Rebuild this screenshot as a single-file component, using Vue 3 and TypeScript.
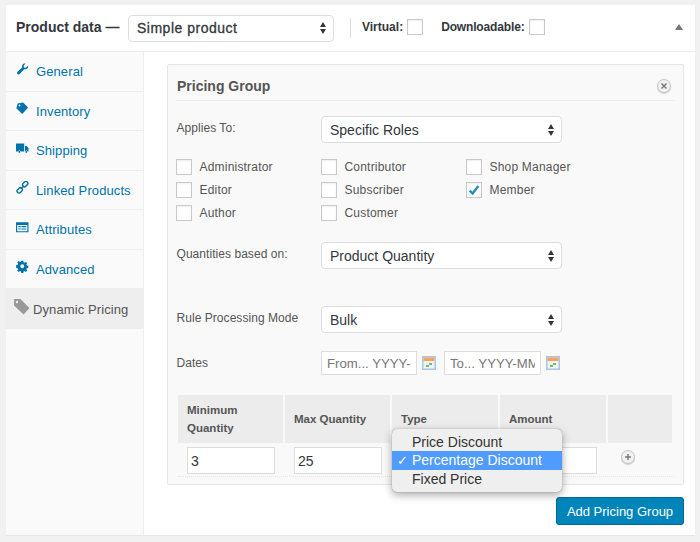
<script setup lang="ts">
interface Tab {
  label: string
  icon: string
  active?: boolean
}

const tabs: Tab[] = [
  { label: 'General', icon: 'wrench' },
  { label: 'Inventory', icon: 'diamond' },
  { label: 'Shipping', icon: 'truck' },
  { label: 'Linked Products', icon: 'link' },
  { label: 'Attributes', icon: 'list' },
  { label: 'Advanced', icon: 'gear' },
  { label: 'Dynamic Pricing', icon: 'tag', active: true }
]

const roles = [
  { label: 'Administrator', checked: false },
  { label: 'Contributor', checked: false },
  { label: 'Shop Manager', checked: false },
  { label: 'Editor', checked: false },
  { label: 'Subscriber', checked: false },
  { label: 'Member', checked: true },
  { label: 'Author', checked: false },
  { label: 'Customer', checked: false }
]

const options = ['Price Discount', 'Percentage Discount', 'Fixed Price']
const selectedOption = 'Percentage Discount'
</script>

<template>
  <div class="page">
    <div class="panel">
      <header class="panel__head">
        <span class="panel__title">Product data —</span>
        <div class="select select--type">
          <span>Simple product</span>
          <svg class="select__arrows" viewBox="0 0 6 12"><path d="M3 0 6 5H0zM3 12 0 7h6z" /></svg>
        </div>
        <span class="panel__divider"></span>
        <label class="panel__opt">Virtual: <span class="check"></span></label>
        <label class="panel__opt panel__opt--down">Downloadable: <span class="check"></span></label>
        <span class="panel__toggle"></span>
      </header>

      <div class="panel__body">
        <nav class="tabs">
          <a v-for="tab in tabs" :key="tab.label" class="tab" :class="{ 'tab--active': tab.active }">
            <svg class="tab__icon" viewBox="0 0 16 16">
              <path v-if="tab.icon === 'wrench'" d="M15.500 3.600c.3 1.600-.2 3-1.400 3.800-1 .7-2.200.8-3.300.4L4.800 14c-.8.800-2.100.9-2.900.1s-.7-2.100.1-2.900l6-5.900c-.4-1.100-.3-2.300.4-3.300C9.200 1 10.800.400 12.400.700L9.800 3.300l.5 2.300 2.300.5z" />
              <path v-else-if="tab.icon === 'diamond'" fill-rule="evenodd" d="M9 .5 15.500 7 8 15.500.5 8 2 2zM4.500 3.300a1.200 1.200 0 1 0 0 2.400 1.200 1.200 0 0 0 0-2.400z" />
              <path v-else-if="tab.icon === 'truck'" d="M0 2h10.500v10H6a1.700 1.700 0 0 0-3.200 0H0zM11.500 5h2.200L16 7.800V12h-1.200a1.700 1.700 0 0 0-3.200 0h-.1zM4.400 11.500a1.200 1.200 0 1 1 0 2.400 1.200 1.200 0 0 1 0-2.400zM13.200 11.500a1.200 1.200 0 1 1 0 2.400 1.200 1.200 0 0 1 0-2.400z" />
              <g v-else-if="tab.icon === 'link'" fill="none" stroke="currentColor" stroke-width="1.800">
                <rect x="8" y="1.500" width="7.500" height="5" rx="2.400" transform="rotate(-45 11.700 4)" />
                <rect x="1" y="9.500" width="7.500" height="5" rx="2.400" transform="rotate(-45 4.700 12)" />
                <path d="M6 10l4-4" />
              </g>
              <path v-else-if="tab.icon === 'list'" fill-rule="evenodd" d="M0 1.500h16v13H0zM1.500 5v8h13V5zM3 6.500h3V8H3zM3 9.500h3V11H3zM7 6.500h6V8H7zM7 9.500h6V11H7z" />
              <path v-else-if="tab.icon === 'gear'" fill-rule="evenodd" d="M6.700 1h2.600l.4 2 1.200.5 1.700-1.100 1.800 1.800-1.100 1.700.5 1.200 2 .4v2.600l-2 .4-.5 1.200 1.100 1.700-1.800 1.800-1.700-1.100-1.200.5-.4 2H6.700l-.4-2-1.200-.5-1.700 1.100-1.800-1.800 1.100-1.700-.5-1.200-2-.4V6.500l2-.4.5-1.200-1.100-1.700 1.800-1.800 1.700 1.100 1.200-.5zM8 5.500a2.500 2.500 0 1 0 0 5 2.500 2.500 0 0 0 0-5z" />
              <path v-else fill-rule="evenodd" d="M1 1h6l8.500 8.500L10 15.500 1 7zM3.800 2.700a1.100 1.100 0 1 0 0 2.200 1.100 1.100 0 0 0 0-2.200z" />
            </svg>
            {{ tab.label }}
          </a>
        </nav>

        <main class="content">
          <section class="card">
            <div class="card__head">
              <h3>Pricing Group</h3>
              <span class="round-btn">
                <svg viewBox="0 0 10 10"><path d="M2.500 2.500l5 5M7.500 2.500l-5 5" /></svg>
              </span>
            </div>

            <div class="field field--applies">
              <span class="field__label">Applies To:</span>
              <div class="select">
                <span>Specific Roles</span>
                <svg class="select__arrows" viewBox="0 0 6 12"><path d="M3 0 6 5H0zM3 12 0 7h6z" /></svg>
              </div>
            </div>

            <div class="roles">
              <label v-for="role in roles" :key="role.label" class="role">
                <span class="check">
                  <svg v-if="role.checked" viewBox="0 0 16 16"><path d="M3 8.500 6.400 12 13 3.500" /></svg>
                </span>
                {{ role.label }}
              </label>
            </div>

            <div class="field field--qty">
              <span class="field__label">Quantities based on:</span>
              <div class="select">
                <span>Product Quantity</span>
                <svg class="select__arrows" viewBox="0 0 6 12"><path d="M3 0 6 5H0zM3 12 0 7h6z" /></svg>
              </div>
            </div>

            <div class="field field--mode">
              <span class="field__label">Rule Processing Mode</span>
              <div class="select">
                <span>Bulk</span>
                <svg class="select__arrows" viewBox="0 0 6 12"><path d="M3 0 6 5H0zM3 12 0 7h6z" /></svg>
              </div>
            </div>

            <div class="field field--dates">
              <span class="field__label">Dates</span>
              <div class="dates">
                <input class="input input--date" placeholder="From... YYYY-MM-DD" />
                <svg class="cal" viewBox="0 0 14 14">
                  <rect width="14" height="14" fill="#a9c6e6" />
                  <rect x="1.500" y="1.500" width="11" height="11" fill="#eef3f4" />
                  <rect x="1.500" y="1.500" width="11" height="3.500" fill="#f3a65a" />
                  <rect x="7" y="7" width="3" height="2" fill="#7fb56d" />
                  <rect x="4" y="9" width="3" height="2" fill="#7fb56d" />
                </svg>
                <input class="input input--date input--to" placeholder="To... YYYY-MM-DD" />
                <svg class="cal" viewBox="0 0 14 14">
                  <rect width="14" height="14" fill="#a9c6e6" />
                  <rect x="1.500" y="1.500" width="11" height="11" fill="#eef3f4" />
                  <rect x="1.500" y="1.500" width="11" height="3.500" fill="#f3a65a" />
                  <rect x="7" y="7" width="3" height="2" fill="#7fb56d" />
                  <rect x="4" y="9" width="3" height="2" fill="#7fb56d" />
                </svg>
              </div>
            </div>

            <div class="rules">
              <div class="rules__th">Minimum<br />Quantity</div>
              <div class="rules__th">Max Quantity</div>
              <div class="rules__th">Type</div>
              <div class="rules__th">Amount</div>
              <div class="rules__th"></div>
              <div class="rules__td"><input class="input" value="3" /></div>
              <div class="rules__td"><input class="input" value="25" /></div>
              <div class="rules__td"></div>
              <div class="rules__td"><input class="input" /></div>
              <div class="rules__td rules__td--add">
                <span class="round-btn">
                  <svg viewBox="0 0 10 10"><path d="M5 2v6M2 5h6" /></svg>
                </span>
              </div>
            </div>

            <ul class="menu">
              <li v-for="opt in options" :key="opt" class="menu__item" :class="{ 'menu__item--on': opt === selectedOption }">
                <span class="menu__tick">{{ opt === selectedOption ? '✓' : '' }}</span>{{ opt }}
              </li>
            </ul>
          </section>

          <div class="actions">
            <button class="btn" type="button">Add Pricing Group</button>
          </div>
        </main>
      </div>
    </div>
  </div>
</template>

<style scoped>
.page {
  box-sizing: border-box;
  width: 700px;
  height: 542px;
  padding: 5px 5px 7px 6px;
  background: #f1f1f1;
  font-family: "Liberation Sans", Arial, sans-serif;
  font-size: 13px;
  color: #555;
  overflow: hidden;
}

.panel {
  display: flex;
  flex-direction: column;
  height: 100%;
  background: #fff;
  box-shadow: 0 1px 1px rgba(0, 0, 0, 0.04);
}

.panel__head {
  display: flex;
  align-items: center;
  box-sizing: border-box;
  height: 47px;
  padding: 0 0 0 10px;
  border-bottom: 1px solid #eee;
  color: #32373c;
}

.panel__title {
  width: 112px;
  margin-top: -3px;
  font-size: 14px;
  font-weight: 700;
}

.panel__divider {
  width: 1px;
  height: 20px;
  margin: 0 11px 0 16px;
  background: #ddd;
}

.panel__opt {
  display: flex;
  align-items: center;
  gap: 4px;
  margin-top: -3px;
  font-size: 12px;
  font-weight: 700;
}

.panel__opt--down {
  margin-left: 18px;
  letter-spacing: -0.15px;
}

.panel__toggle {
  margin: -3px 12px 0 auto;
  border-left: 4px solid transparent;
  border-right: 4px solid transparent;
  border-bottom: 6px solid #777;
}

.panel__body {
  display: flex;
  flex: 1;
  min-height: 0;
}

.tabs {
  display: flex;
  flex-direction: column;
  flex: 0 0 138px;
  box-sizing: border-box;
  background: #fafafa;
  border-right: 1px solid #eee;
}

.tab {
  display: flex;
  align-items: center;
  gap: 7.5px;
  box-sizing: border-box;
  height: 39.5px;
  padding-left: 10px;
  padding-top: 1px;
  border-bottom: 1px solid #eee;
  color: #0073aa;
  font-size: 13px;
  letter-spacing: 0.1px;
}

.tab--active {
  gap: 3px;
  padding-left: 7px;
  background: #eee;
  color: #555;
  border-bottom: 0;
}

.tab__icon {
  flex: none;
  width: 12.5px;
  height: 12.5px;
  margin-top: -6px;
  fill: currentColor;
}

.tab--active .tab__icon {
  width: 17px;
  height: 17px;
  fill: #999;
}

.content {
  flex: 1;
  min-width: 0;
  padding: 12px 11px 0 23px;
}

.card {
  position: relative;
  box-sizing: border-box;
  height: 421px;
  padding: 0 8px;
  background: #f9f9f9;
  border: 1px solid #e5e5e5;
  border-radius: 2px;
}

.card__head {
  display: flex;
  align-items: center;
  justify-content: space-between;
  box-sizing: border-box;
  height: 36px;
  padding: 6px 4px 0 0;
  border-bottom: 1px solid #eee;
}

.card__head h3 {
  margin: 0;
  padding-left: 1px;
  font-size: 14px;
  font-weight: 700;
  color: #555;
}

.round-btn {
  display: flex;
  align-items: center;
  justify-content: center;
  box-sizing: border-box;
  width: 14px;
  height: 14px;
  border: 1px solid #c4c4c4;
  border-radius: 50%;
  background: #f1f1f1;
  box-shadow: 0 1px 1px rgba(0, 0, 0, 0.15);
}

.round-btn svg {
  width: 10px;
  height: 10px;
  fill: none;
  stroke: #777;
  stroke-width: 1.4;
}

.field {
  display: grid;
  grid-template-columns: 145px auto;
  align-items: center;
  justify-content: start;
}

.field__label {
  padding-left: 0.5px;
  font-size: 12px;
  letter-spacing: 0.05px;
  margin-top: -4px;
}

.field--applies {
  margin-top: 15px;
}

.field--qty {
  margin-top: 14px;
}

.field--mode {
  margin-top: 37px;
}

.field--dates {
  margin-top: 18px;
}

.field--dates .field__label {
  margin-top: 0;
}

.select {
  display: flex;
  align-items: center;
  justify-content: space-between;
  box-sizing: border-box;
  width: 241px;
  height: 27px;
  padding: 0 7px 0 8px;
  background: #fff;
  border: 1px solid #ddd;
  border-radius: 4px;
  color: #32373c;
  font-size: 14px;
}

.select--type {
  width: 206px;
  letter-spacing: 0.5px;
  -webkit-text-stroke: 0.3px #32373c;
}

.select__arrows {
  width: 6px;
  height: 12px;
  fill: #32373c;
  -webkit-text-stroke: 0;
}

.roles {
  display: grid;
  grid-template-columns: repeat(3, 145px);
  grid-auto-rows: 23px;
  margin-top: 16px;
}

.role {
  display: flex;
  align-items: center;
  gap: 7.5px;
  height: 16px;
  font-size: 12px;
  letter-spacing: 0.2px;
}

.check {
  display: inline-flex;
  flex: none;
  box-sizing: border-box;
  width: 16px;
  height: 16px;
  background: #fff;
  border: 1px solid #c9c9c9;
  box-shadow: inset 0 1px 2px rgba(0, 0, 0, 0.07);
}

.check svg {
  width: 14px;
  height: 14px;
  fill: none;
  stroke: #1e8cbe;
  stroke-width: 2.6;
}

.dates {
  display: flex;
  align-items: center;
  gap: 5px;
}

.input {
  display: block;
  box-sizing: border-box;
  width: 88px;
  height: 27px;
  padding: 0 3px;
  background: #fff;
  border: 1px solid #ddd;
  border-radius: 0;
  outline: none;
  font-family: inherit;
  font-size: 14px;
  color: #32373c;
}

.input--date {
  width: 96px;
  height: 24px;
  padding: 0 5px;
  font-size: 13.2px;
}

.input--date::placeholder {
  color: #777;
  opacity: 1;
}

.input--to {
  width: 97px;
  margin-left: 3px;
}

.cal {
  width: 14px;
  height: 14px;
}

.rules {
  display: grid;
  grid-template-columns: 105px 105px 106px 106px 64px;
  column-gap: 2px;
  margin: 20px 1px 0 2px;
  border-bottom: 1px dotted #e5e5e5;
}

.rules__th {
  display: flex;
  align-items: center;
  box-sizing: border-box;
  height: 48px;
  padding-left: 9px;
  background: #ececec;
  font-size: 11.5px;
  font-weight: 700;
  line-height: 18px;
}

.rules__td {
  height: 33px;
  padding: 4px 0 0 9px;
  box-sizing: border-box;
}

.rules__td--add {
  padding: 7px 0 0 13px;
}

.menu {
  position: absolute;
  left: 224px;
  top: 364px;
  box-sizing: border-box;
  width: 170px;
  height: 63px;
  margin: 0;
  padding: 4px 0;
  list-style: none;
  background: #efefef;
  border-radius: 5px;
  box-shadow: 0 0 1px rgba(0, 0, 0, 0.45), 0 3px 9px rgba(0, 0, 0, 0.35);
  font-size: 14px;
  color: #333;
}

.menu__item {
  display: flex;
  align-items: center;
  height: 18.3px;
}

.menu__item--on {
  background: #4f9bff;
  color: #fff;
}

.menu__tick {
  width: 20px;
  padding-left: 5px;
  box-sizing: border-box;
  font-family: "DejaVu Sans", sans-serif;
  font-size: 13px;
  font-weight: 700;
}

.actions {
  display: flex;
  justify-content: flex-end;
  margin-top: 12px;
}

.btn {
  width: 128px;
  height: 28px;
  padding: 0;
  background: #0085ba;
  border: 1px solid #006799;
  border-radius: 3px;
  color: #fff;
  font-family: inherit;
  font-size: 13px;
}
</style>
